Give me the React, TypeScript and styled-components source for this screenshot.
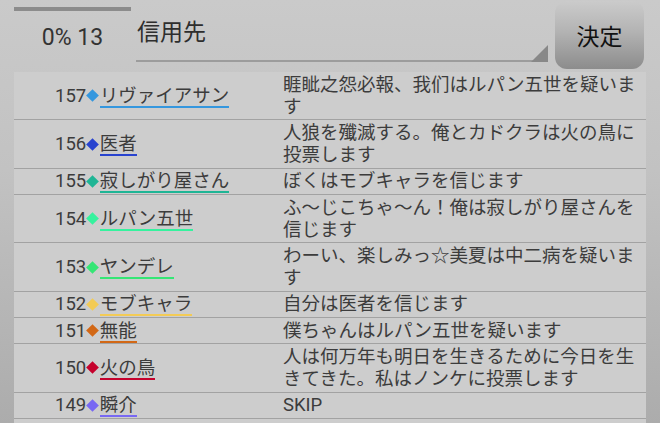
import React from "react";
import styled, { createGlobalStyle } from "styled-components";

const Global = createGlobalStyle`
  html, body { margin: 0; padding: 0; }
  body {
    font-family: "Roboto", "Noto Sans CJK JP", sans-serif;
    background: #c4c4c4;
  }
`;

const Page = styled.div`
  width: 660px;
  height: 423px;
  box-sizing: border-box;
  padding: 0 14px;
  display: flex;
  flex-direction: column;
  overflow: hidden;
  background: linear-gradient(to bottom, #cacaca 0%, #c2c2c2 40%, #acacac 100%);
`;

const Header = styled.div`
  height: 72px;
  flex: none;
  display: flex;
  align-items: flex-start;
`;

const StatusBox = styled.div`
  width: 117px;
  flex: none;
  display: flex;
  flex-direction: column;
`;

const Progress = styled.div`
  margin-top: 7px;
  height: 4px;
  background: #8c8c8c;
`;

const Count = styled.div`
  margin-top: 15px;
  font-size: 23px;
  line-height: 1;
  color: #333;
  text-align: center;
`;

const Spinner = styled.div`
  position: relative;
  margin-left: 5px;
  width: 412px;
  height: 60px;
  border-bottom: 2px solid #9c9c9c;
  flex: none;
`;

const SpinnerLabel = styled.div`
  padding: 21px 0 0 1px;
  font-size: 23px;
  line-height: 1;
  color: #2e2e2e;
`;

const SpinnerArrow = styled.span`
  position: absolute;
  right: 0;
  bottom: -2px;
  width: 0;
  height: 0;
  border-left: 17px solid transparent;
  border-bottom: 17px solid #888;
`;

const DecideButton = styled.button`
  margin: 1px 2px 0 7px;
  width: 89px;
  height: 68px;
  flex: none;
  border: none;
  border-radius: 12px;
  background: linear-gradient(to bottom, #cbcbcb 0%, #b3b3b3 45%, #8c8c8c 100%);
  font-family: "Roboto", "Noto Sans CJK JP", sans-serif;
  font-size: 23px;
  color: #111;
  display: flex;
  align-items: center;
  justify-content: center;
  padding: 0;
`;

const List = styled.div`
  flex: 1;
  background: #cdcdcd;
  display: flex;
  flex-direction: column;
`;

const Row = styled.div`
  display: grid;
  grid-template-columns: 268px 1fr;
  border-bottom: 1px solid #a2a2a2;
`;

const Who = styled.div`
  display: flex;
  align-items: center;
  padding-left: 41px;
  font-size: 18.5px;
  color: #3c3c3c;
`;

const Num = styled.span`
  line-height: 20px;
`;

const Diamond = styled.span<{ $c: string }>`
  width: 13px;
  height: 20px;
  display: inline-flex;
  align-items: center;
  justify-content: center;
  &::before {
    content: "";
    width: 9px;
    height: 9px;
    background: ${(p) => p.$c};
    transform: rotate(45deg);
  }
`;

const Name = styled.span<{ $c: string }>`
  display: inline-block;
  line-height: 20px;
  padding-top: 2px;
  border-bottom: 2px solid ${(p) => p.$c};
  margin-left: 0.5px;
`;

const Msg = styled.div`
  padding: 1.5px 0 1.5px 1px;
  font-size: 18.5px;
  line-height: 22.2px;
  color: #3c3c3c;
`;

const rows = [
  { id: 157, name: "リヴァイアサン", c: "#3597de", msg: "睚眦之怨必報、我们はルパン五世を疑います" },
  { id: 156, name: "医者", c: "#2843cf", msg: "人狼を殲滅する。俺とカドクラは火の鳥に投票します" },
  { id: 155, name: "寂しがり屋さん", c: "#1fb595", msg: "ぼくはモブキャラを信じます" },
  { id: 154, name: "ルパン五世", c: "#36f29e", msg: "ふ～じこちゃ～ん！俺は寂しがり屋さんを信じます" },
  { id: 153, name: "ヤンデレ", c: "#35e675", msg: "わーい、楽しみっ☆美夏は中二病を疑います" },
  { id: 152, name: "モブキャラ", c: "#f3cb55", msg: "自分は医者を信じます" },
  { id: 151, name: "無能", c: "#d26816", msg: "僕ちゃんはルパン五世を疑います" },
  { id: 150, name: "火の鳥", c: "#c5022d", msg: "人は何万年も明日を生きるために今日を生きてきた。私はノンケに投票します" },
  { id: 149, name: "瞬介", c: "#7868f3", msg: "SKIP" },
];

export default function App() {
  return (
    <>
      <Global />
      <Page>
        <Header>
          <StatusBox>
            <Progress />
            <Count>0% 13</Count>
          </StatusBox>
          <Spinner>
            <SpinnerLabel>信用先</SpinnerLabel>
            <SpinnerArrow />
          </Spinner>
          <DecideButton>決定</DecideButton>
        </Header>
        <List>
          {rows.map((r) => (
            <Row key={r.id}>
              <Who>
                <Num>{r.id}</Num>
                <Diamond $c={r.c} />
                <Name $c={r.c}>{r.name}</Name>
              </Who>
              <Msg>{r.msg}</Msg>
            </Row>
          ))}
        </List>
      </Page>
    </>
  );
}
